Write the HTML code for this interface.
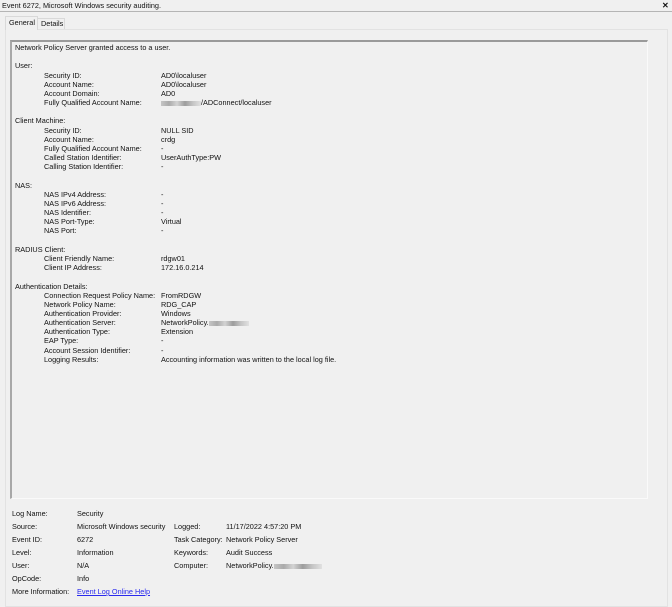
<!DOCTYPE html>
<html><head><meta charset="utf-8"><style>
*{margin:0;padding:0;box-sizing:border-box}
body{width:672px;height:607px;background:#f0f0f0;font-family:"Liberation Sans",sans-serif;font-size:7.3px;color:#111;position:relative;overflow:hidden}
.a{position:absolute;white-space:nowrap;line-height:9.1px}
.t{transform:translateY(2px)}
.blur{display:inline-block;height:5px;vertical-align:middle;background:linear-gradient(90deg,#bbb,#999 20%,#ccc 40%,#888 60%,#bbb 80%,#ddd);opacity:.8}
a{color:#2a2aee;text-decoration:underline}
</style></head><body>
<div class="a" style="left:2px;top:1px">Event 6272, Microsoft Windows security auditing.</div>
<div class="a" style="left:662px;top:1px;font-weight:bold;font-size:8px">✕</div>
<div style="position:absolute;left:0;top:11px;width:672px;height:1px;background:#b5b5b5"></div>
<div style="position:absolute;left:5px;top:29px;width:663px;height:578px;border:1px solid #e2e2e2;background:#f0f0f0"></div>
<div style="position:absolute;left:5px;top:16px;width:33px;height:14px;border:1px solid #d9d9d9;border-bottom:none;background:#f0f0f0"></div>
<div class="a" style="left:9px;top:18px">General</div>
<div style="position:absolute;left:38px;top:18px;width:27px;height:11px;border:1px solid #d9d9d9;border-bottom:none;border-left:none"></div>
<div class="a" style="left:41px;top:19px">Details</div>
<div style="position:absolute;left:10px;top:40px;width:638px;height:459px;border:1px solid #fafafa;border-top:2px solid #9a9a9a;border-left:2px solid #a8a8a8;background:#f0f0f0"></div>
<div class="t">
<div class="a" style="left:15px;top:41px">Network Policy Server granted access to a user.</div>
<div class="a" style="left:15px;top:59px">User:</div>
<div class="a" style="left:44px;top:69px">Security ID:<br>Account Name:<br>Account Domain:<br>Fully Qualified Account Name:</div>
<div class="a" style="left:161px;top:69px">AD0\localuser<br>AD0\localuser<br>AD0<br><span class="blur" style="width:40px"></span>/ADConnect/localuser</div>
<div class="a" style="left:15px;top:114px">Client Machine:</div>
<div class="a" style="left:44px;top:124px">Security ID:<br>Account Name:<br>Fully Qualified Account Name:<br>Called Station Identifier:<br>Calling Station Identifier:</div>
<div class="a" style="left:161px;top:124px">NULL SID<br>crdg<br>-<br>UserAuthType:PW<br>-</div>
<div class="a" style="left:15px;top:179px">NAS:</div>
<div class="a" style="left:44px;top:188px">NAS IPv4 Address:<br>NAS IPv6 Address:<br>NAS Identifier:<br>NAS Port-Type:<br>NAS Port:</div>
<div class="a" style="left:161px;top:188px">-<br>-<br>-<br>Virtual<br>-</div>
<div class="a" style="left:15px;top:243px">RADIUS Client:</div>
<div class="a" style="left:44px;top:252px">Client Friendly Name:<br>Client IP Address:</div>
<div class="a" style="left:161px;top:252px">rdgw01<br>172.16.0.214</div>
<div class="a" style="left:15px;top:280px">Authentication Details:</div>
<div class="a" style="left:44px;top:289px">Connection Request Policy Name:<br>Network Policy Name:<br>Authentication Provider:<br>Authentication Server:<br>Authentication Type:<br>EAP Type:<br>Account Session Identifier:<br>Logging Results:</div>
<div class="a" style="left:161px;top:289px">FromRDGW<br>RDG_CAP<br>Windows<br>NetworkPolicy.<span class="blur" style="width:40px"></span><br>Extension<br>-<br>-<br>Accounting information was written to the local log file.</div>
</div>
<div class="a" style="left:12px;top:507px;line-height:13px">Log Name:<br>Source:<br>Event ID:<br>Level:<br>User:<br>OpCode:<br>More Information:</div>
<div class="a" style="left:77px;top:507px;line-height:13px">Security<br>Microsoft Windows security<br>6272<br>Information<br>N/A<br>Info<br><a>Event Log Online Help</a></div>
<div class="a" style="left:174px;top:520px;line-height:13px">Logged:<br>Task Category:<br>Keywords:<br>Computer:</div>
<div class="a" style="left:226px;top:520px;line-height:13px">11/17/2022 4:57:20 PM<br>Network Policy Server<br>Audit Success<br>NetworkPolicy.<span class="blur" style="width:48px"></span></div>
</body></html>
